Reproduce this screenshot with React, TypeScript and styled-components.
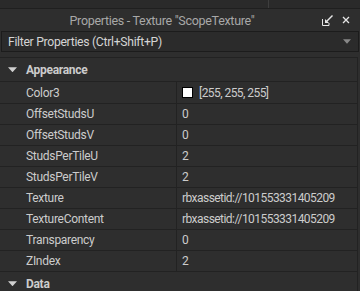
import React from "react";
import styled, { createGlobalStyle } from "styled-components";

const GlobalStyle = createGlobalStyle`
  html, body {
    margin: 0;
    padding: 0;
    background: #2e2e2e;
  }
  body {
    font-family: Roboto, "Liberation Sans", sans-serif;
  }
`;

const Panel = styled.div`
  width: 360px;
  height: 291px;
  overflow: hidden;
  display: flex;
  flex-direction: column;
  background: #2e2e2e;
  color: #cccccc;
  font-size: 12px;
  letter-spacing: -0.3px;
`;

const TopStrip = styled.div`
  height: 8px;
  flex: none;
  display: flex;
  background: #2a2a2a;
  border-bottom: 1px solid #1f1f1f;
`;

const TopTab = styled.div`
  width: 268px;
  border-right: 1px solid #3e3e3e;
`;

const TitleBar = styled.div`
  height: 22px;
  flex: none;
  display: flex;
  align-items: center;
  background: #2e2e2e;
`;

const Title = styled.div`
  flex: 1;
  text-align: center;
  color: #a8a8a8;
  font-size: 12.5px;
  padding-left: 6px;
`;

const TitleButtons = styled.div`
  width: 42px;
  box-sizing: border-box;
  display: flex;
  align-items: center;
  gap: 9px;
  padding-left: 4px;
`;

const FilterBox = styled.div`
  height: 19px;
  flex: none;
  margin: 0 1px;
  display: flex;
  align-items: center;
  justify-content: space-between;
  padding: 0 7px 0 6px;
  background: #2b2b2b;
  border: 1px solid #1c1c1c;
  font-size: 12.2px;
  color: #d4d4d4;
`;

const Gap = styled.div`
  height: 5px;
  flex: none;
`;

const Grid = styled.div`
  flex: 1;
  display: flex;
  flex-direction: column;
  border-top: 1px solid #222222;
  margin-right: 2px;
  border-right: 1px solid #222222;
`;

const Category = styled.div`
  height: 23px;
  flex: none;
  display: flex;
  align-items: center;
  background: #2e2e2e;
  border-bottom: 1px solid #222222;
  font-weight: 700;
  color: #cccccc;
`;

const Caret = styled.span`
  width: 26px;
  display: flex;
  justify-content: center;
  padding-right: 2px;
  box-sizing: border-box;
`;

const Row = styled.div<{ $tall?: boolean }>`
  height: ${(p) => (p.$tall ? 21 : 20)}px;
  flex: none;
  display: grid;
  grid-template-columns: 177px 1fr;
  border-bottom: 1px solid #222222;
`;

const NameCell = styled.div`
  padding-left: 26px;
  display: flex;
  align-items: center;
  border-right: 1px solid #222222;
  color: #cccccc;
`;

const ValueCell = styled.div`
  padding-left: 5px;
  display: flex;
  align-items: center;
  gap: 6px;
  color: #cccccc;
  white-space: nowrap;
  letter-spacing: -0.55px;
`;

const Swatch = styled.span`
  width: 9px;
  height: 9px;
  flex: none;
  background: #ffffff;
  border: 1px solid #000000;
`;

const DownTriangle = ({ size = 9, color = "#d0d0d0" }: { size?: number; color?: string }) => (
  <svg width={size} height={size / 2 + 1} viewBox="0 0 9 5">
    <path d="M0 0 H9 L4.5 5 Z" fill={color} />
  </svg>
);

const props: { name: string; value: string; color?: boolean }[] = [
  { name: "Color3", value: "[255, 255, 255]", color: true },
  { name: "OffsetStudsU", value: "0" },
  { name: "OffsetStudsV", value: "0" },
  { name: "StudsPerTileU", value: "2" },
  { name: "StudsPerTileV", value: "2" },
  { name: "Texture", value: "rbxassetid://101553331405209" },
  { name: "TextureContent", value: "rbxassetid://101553331405209" },
  { name: "Transparency", value: "0" },
  { name: "ZIndex", value: "2" },
];

export default function App() {
  return (
    <>
      <GlobalStyle />
      <Panel>
        <TopStrip>
          <TopTab />
        </TopStrip>
        <TitleBar>
          <Title>Properties - Texture "ScopeTexture"</Title>
          <TitleButtons>
            <svg width="11" height="11" viewBox="0 0 11 11">
              <path d="M0.5 4 V10.5 H7 V8" stroke="#e6e6e6" strokeWidth="1" fill="none" />
              <path d="M3 8 L3 4 L7 8 Z" fill="#e6e6e6" />
              <path d="M4.5 6.5 L10.5 0.5" stroke="#e6e6e6" strokeWidth="1.4" />
            </svg>
            <svg width="8" height="8" viewBox="0 0 8 8">
              <path d="M1 1 L7 7 M7 1 L1 7" stroke="#e6e6e6" strokeWidth="1.3" />
            </svg>
          </TitleButtons>
        </TitleBar>
        <FilterBox>
          <span>Filter Properties (Ctrl+Shift+P)</span>
          <DownTriangle size={8} color="#888888" />
        </FilterBox>
        <Gap />
        <Grid>
          <Category>
            <Caret>
              <DownTriangle />
            </Caret>
            Appearance
          </Category>
          {props.map((p, i) => (
            <Row key={p.name} $tall={i === 0}>
              <NameCell>{p.name}</NameCell>
              <ValueCell>
                {p.color && <Swatch />}
                {p.value}
              </ValueCell>
            </Row>
          ))}
          <Category>
            <Caret>
              <DownTriangle />
            </Caret>
            Data
          </Category>
        </Grid>
      </Panel>
    </>
  );
}
